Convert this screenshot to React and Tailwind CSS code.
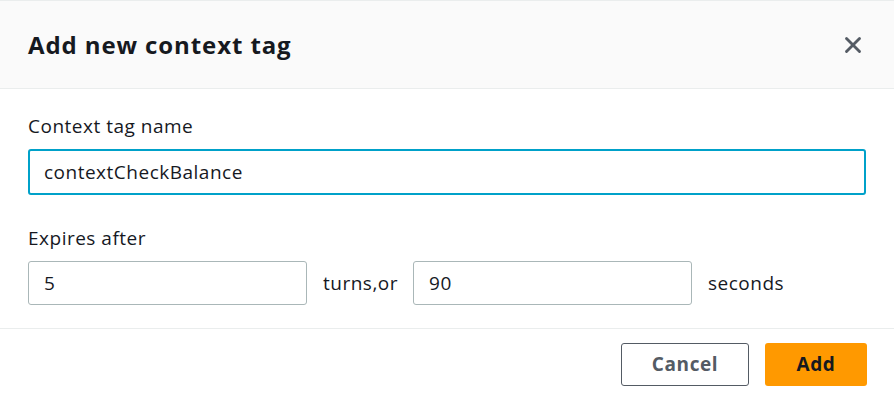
import { X } from "lucide-react";

export default function App() {
  return (
    <div
      className="w-[894px] h-[400px] bg-white text-[#16191f] border-t border-[#eaeded] flex flex-col overflow-hidden"
      style={{ fontFamily: "'Open Sans', Roboto, 'Liberation Sans', sans-serif" }}
    >
      <div className="h-[88px] bg-[#fafafa] border-b border-[#eaeded] flex items-center justify-between pl-[28px] pr-[28px]">
        <h2 className="text-[24px] font-bold tracking-[0.9px]">Add new context tag</h2>
        <X size={26} strokeWidth={2.6} className="text-[#545b64]" />
      </div>

      <div className="flex-1 flex flex-col px-[28px] pt-[24px] border-b border-[#eaeded] text-[19px] tracking-[0.5px]">
        <label className="leading-[26px]">Context tag name</label>
        <div className="mt-[10px] h-[46px] rounded-[3px] border-2 border-[#00a1c9] flex items-center px-[14px]">
          contextCheckBalance
        </div>

        <label className="mt-[30px] leading-[26px]">Expires after</label>
        <div className="mt-[10px] flex items-center">
          <div className="w-[279px] h-[44px] rounded-[3px] border border-[#aab7b8] flex items-center px-[15px]">
            5
          </div>
          <span className="ml-[16px]">turns,or</span>
          <div className="ml-[15px] w-[279px] h-[44px] rounded-[3px] border border-[#aab7b8] flex items-center px-[15px]">
            90
          </div>
          <span className="ml-[16px]">seconds</span>
        </div>
      </div>

      <div className="h-[71px] flex items-start justify-end gap-[16px] pr-[27px] pt-[14px]">
        <button className="w-[128px] h-[43px] rounded-[3px] border border-[#545b64] text-[#545b64] font-bold text-[19px] tracking-[0.6px]">
          Cancel
        </button>
        <button className="w-[102px] h-[43px] rounded-[3px] bg-[#ff9900] text-[#16191f] font-bold text-[19px] tracking-[0.6px]">
          Add
        </button>
      </div>
    </div>
  );
}
